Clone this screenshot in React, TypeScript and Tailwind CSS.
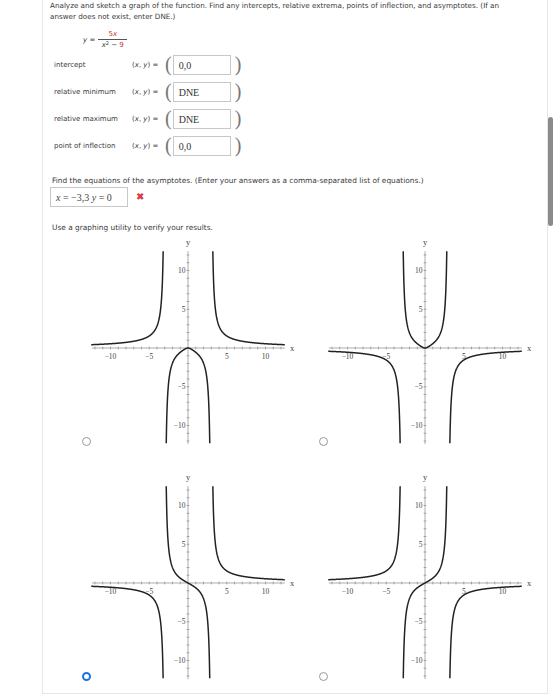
import { useId } from 'react';

// ── 그래프 설정 ─────────────────────────────────────────────

type Fn = (x: number) => number;

const S = 7.75; // px per unit
const CX = 97;
const CY = 112;
const W = 207;
const H = 210;

const f1: Fn = (x) => (5 * x * x) / ((x * x - 9) * Math.sqrt(x * x + 0.25));
const f2: Fn = (x) => -f1(x);
const f3: Fn = (x) => (5 * x) / (x * x - 9);
const f4: Fn = (x) => -f3(x);

function branchPath(f: Fn, a: number, b: number) {
  const n = 600;
  const pts: string[] = [];
  for (let i = 0; i <= n; i++) {
    const x = a + ((b - a) * i) / n;
    const y = f(x);
    if (!isFinite(y) || Math.abs(y) > 16) continue;
    pts.push(`${(CX + x * S).toFixed(2)},${(CY - y * S).toFixed(2)}`);
  }
  return pts.length ? 'M' + pts.join('L') : '';
}

function Graph({ f }: { f: Fn }) {
  const id = useId().replace(/:/g, '');
  const e = 1e-6;
  const branches = [
    branchPath(f, -12.5, -3 - e),
    branchPath(f, -3 + e, 3 - e),
    branchPath(f, 3 + e, 12.5),
  ];
  const ticks = Array.from({ length: 25 }, (_, i) => i - 12).filter((i) => i !== 0);
  const xLabels = [-10, -5, 5, 10];
  const yLabels = [10, 5, -5, -10];

  return (
    <svg width={W} height={H} viewBox={`0 0 ${W} ${H}`} className="block">
      <defs>
        <clipPath id={`c${id}`}>
          <rect x={CX - 12.5 * S} y={CY - 12.5 * S} width={25 * S} height={24.8 * S} />
        </clipPath>
      </defs>
      {/* axes */}
      <g stroke="#8a8a8a" strokeWidth={0.7}>
        <line x1={CX - 12.4 * S} y1={CY} x2={CX + 12.5 * S} y2={CY} />
        <line x1={CX} y1={CY - 12.5 * S} x2={CX} y2={CY + 12.4 * S} />
        {ticks.map((i) => (
          <line key={`x${i}`} x1={CX + i * S} y1={CY - 1.4} x2={CX + i * S} y2={CY + 1.4} />
        ))}
        {ticks.map((i) => (
          <line key={`y${i}`} x1={CX - 1.4} y1={CY - i * S} x2={CX + 1.4} y2={CY - i * S} />
        ))}
      </g>
      <g fill="#444" fontSize={7.5} fontFamily="'Liberation Serif', serif">
        {xLabels.map((v) => (
          <text key={v} x={CX + v * S} y={CY + 11} textAnchor="middle">
            {v < 0 ? `\u2212${-v}` : v}
          </text>
        ))}
        {yLabels.map((v) => (
          <text key={v} x={CX - 2.5} y={CY - v * S + 2.6} textAnchor="end">
            {v < 0 ? `\u2212${-v}` : v}
          </text>
        ))}
        <text x={CX + 104} y={CY + 2.5} fontSize={8.5} textAnchor="middle">
          x
        </text>
        <text x={CX} y={CY - 103} fontSize={8.5} textAnchor="middle">
          y
        </text>
      </g>
      <g clipPath={`url(#c${id})`} fill="none" stroke="#222" strokeWidth={1.5}>
        {branches.map((d, i) => (
          <path key={i} d={d} />
        ))}
      </g>
    </svg>
  );
}

// ── 입력 행 ─────────────────────────────────────────────────

function Row({ label, value }: { label: string; value: string }) {
  return (
    <div className="flex items-center h-5">
      <span className="ml-[11px] w-[78px]">{label}</span>
      <span className="w-[33px]">
        (<i>x</i>, <i>y</i>) =
      </span>
      <span className="font-['Liberation_Serif',serif] text-[20px] leading-none text-[#777] -mt-[2px]">(</span>
      <div className="ml-[1px] w-[58px] h-5 border border-[#c8c8c8] flex items-center pl-[5px] font-['Liberation_Serif',serif] text-[10px] text-[#333]">
        {value}
      </div>
      <span className="ml-[4px] font-['Liberation_Serif',serif] text-[20px] leading-none text-[#777] -mt-[2px]">)</span>
    </div>
  );
}

function Radio({ checked }: { checked?: boolean }) {
  return checked ? (
    <span className="block w-[9px] h-[9px] rounded-full border-[2.5px] border-[#1a73e8] bg-white" />
  ) : (
    <span className="block w-[9px] h-[9px] rounded-full border border-[#999] bg-white" />
  );
}

export default function App() {
  const graphs: { f: Fn; checked?: boolean }[] = [
    { f: f1 },
    { f: f2 },
    { f: f3, checked: true },
    { f: f4 },
  ];

  return (
    <div className="relative w-[557px] h-[700px] bg-white overflow-hidden font-['DejaVu_Sans',Verdana,sans-serif] text-[7px] text-[#3a3a3a]">
      <div className="ml-[42px] w-[506px] border-x border-b border-[#e6e6e6] pb-[12px]">
        <p className="ml-[7px] w-[462px] text-[7.2px] leading-[11px]">
          Analyze and sketch a graph of the function. Find any intercepts, relative extrema, points of inflection, and
          asymptotes. (If an answer does not exist, enter DNE.)
        </p>

        {/* 함수식 */}
        <div className="mt-[6px] ml-[40px] flex items-center h-6">
          <span className="mr-[3px]">
            <i>y</i> =
          </span>
          <span className="inline-flex flex-col items-center w-[29px]">
            <span className="leading-[10px] text-[#c0392b]">
              5<i>x</i>
            </span>
            <span className="block w-full h-px bg-[#555]" />
            <span className="leading-[11px]">
              <i>x</i>
              <sup className="text-[5px]">2</sup> &minus; <span className="text-[#c0392b]">9</span>
            </span>
          </span>
        </div>

        <div className="mt-[3px] flex flex-col gap-[7px]">
          <Row label="intercept" value="0,0" />
          <Row label="relative minimum" value="DNE" />
          <Row label="relative maximum" value="DNE" />
          <Row label="point of inflection" value="0,0" />
        </div>

        <p className="mt-[20px] ml-[9px] text-[7.4px] leading-[10px]">
          Find the equations of the asymptotes. (Enter your answers as a comma-separated list of equations.)
        </p>
        <div className="mt-[1px] ml-[7px] flex items-center">
          <div className="w-[78px] h-5 border border-[#c8c8c8] flex items-center pl-[5px] font-['Liberation_Serif',serif] text-[10px] text-[#444]">
            <i>x</i>&nbsp;=&nbsp;&minus;3,3&nbsp;<i>y</i>&nbsp;=&nbsp;0
          </div>
          <span className="ml-[8px] text-[10px] font-bold leading-none text-[#d9363e]">&#x2716;</span>
        </div>

        <p className="mt-[16px] ml-[9px] text-[7.4px] leading-[10px]">Use a graphing utility to verify your results.</p>

        <div className="mt-[3px] ml-[39px] grid grid-cols-[237px_237px] gap-y-[25px]">
          {graphs.map((g, i) => (
            <div key={i} className="flex items-end">
              <Radio checked={g.checked} />
              <Graph f={g.f} />
            </div>
          ))}
        </div>
      </div>

      {/* 스크롤바 */}
      <div className="absolute left-[548px] top-[117px] w-[5px] h-[109px] rounded-full bg-[#8a8a8a]" />
    </div>
  );
}
